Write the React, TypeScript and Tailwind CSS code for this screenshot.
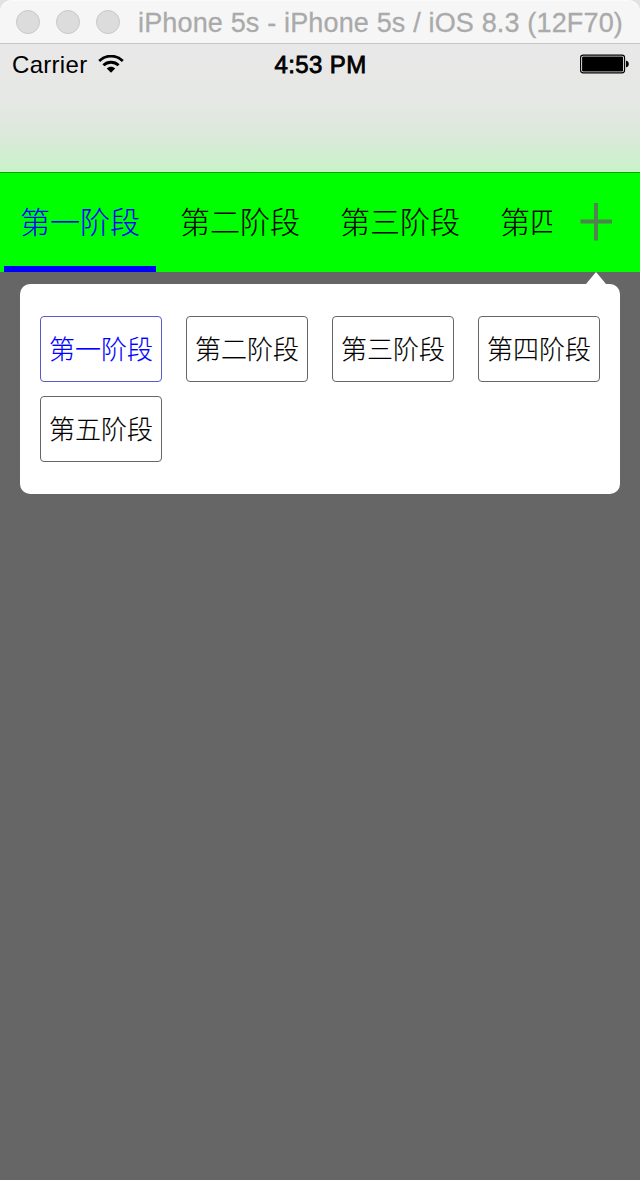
import { useState } from 'react'
import clsx from 'clsx'

const stages = ['第一阶段', '第二阶段', '第三阶段', '第四阶段', '第五阶段']

function TitleBar() {
  return (
    <div className="bg-[#e2e2e2]">
      <div className="flex h-11 items-center rounded-t-xl border-b border-b-[#c6c6c6] bg-[#f6f6f6] pl-4 pt-px shadow-[inset_0_1px_0_#fbfbfb]">
        <div className="flex gap-4">
          {[0, 1, 2].map((dot) => (
            <span key={dot} className="h-6 w-6 rounded-full border border-[#c9c9c9] bg-[#dcdcdc]" />
          ))}
        </div>
        <h1 className="ml-[18px] mt-[3px] whitespace-nowrap text-[27px] leading-none tracking-[0.16px] text-[#aaaaaa] [-webkit-text-stroke:0.3px_#aaaaaa]">
          iPhone 5s - iPhone 5s / iOS 8.3 (12F70)
        </h1>
      </div>
    </div>
  )
}

function WifiIcon() {
  return (
    <svg className="h-[18px] w-[26px]" viewBox="0 0 26 18" fill="none" stroke="black">
      <path strokeWidth={2.8} d="M1.2 5.9C7.8 -.5 18.2 -.5 24.8 5.9" />
      <path strokeWidth={2.8} d="M5.4 10.3C9.7 6.2 16.3 6.2 20.6 10.3" />
      <path fill="black" stroke="none" d="M8.8 13.5C11.3 11.3 14.7 11.3 17.2 13.5L13 17.8Z" />
    </svg>
  )
}

function BatteryIcon() {
  return (
    <svg className="h-5 w-[50px]" viewBox="0 0 50 20">
      <rect x="0.6" y="1.1" width="44" height="17.8" rx="2.6" fill="none" stroke="black" strokeWidth={1.1} />
      <rect x="2.1" y="2.6" width="41" height="14.8" rx="1.2" fill="black" />
      <path d="M46 6.8C49.7 6.8 49.7 13.2 46 13.2Z" fill="black" />
    </svg>
  )
}

function StatusBar() {
  return (
    <div className="grid h-10 grid-cols-3 items-center pl-3 pr-[10px] text-2xl leading-none">
      <div className="flex items-center gap-[11px]">
        <span className="pt-[2px] tracking-[0.3px]">Carrier</span>
        <WifiIcon />
      </div>
      <span className="pr-px pt-[2px] text-center tracking-[0.4px] [-webkit-text-stroke:0.8px_black]">4:53 PM</span>
      <div className="flex justify-end">
        <BatteryIcon />
      </div>
    </div>
  )
}

export default function App() {
  const [selected, setSelected] = useState(0)
  const [open, setOpen] = useState(true)

  return (
    <div className="flex h-[1180px] w-[640px] flex-col overflow-hidden bg-[#666666] font-['Liberation_Sans','Noto_Sans_CJK_SC',sans-serif] text-black">
      <TitleBar />
      <div className="h-32 bg-[linear-gradient(#e8e8e8,#e6e8e5_45%,#dce9db_70%,#c8f2c8)]">
        <StatusBar />
      </div>

      <nav className="flex h-[100px] shrink-0 border-t border-[#00a800] bg-[#00ff00]">
        <div className="flex w-[552px] overflow-hidden">
          {stages.map((stage, i) => (
            <button
              key={stage}
              onClick={() => setSelected(i)}
              className={clsx(
                'flex w-40 shrink-0 flex-col items-center justify-between text-[30px] font-light leading-none [-webkit-text-stroke:0.1px]',
                i === selected && 'text-[#0000ff]'
              )}
            >
              <span className="mt-[35px]">{stage}</span>
              {i === selected && <span className="h-[6px] w-[152px] bg-[#0000ff]" />}
            </button>
          ))}
        </div>
        <button onClick={() => setOpen(!open)} className="flex flex-1 justify-center pt-[30px]">
          <svg className="h-[38px] w-8" viewBox="0 0 32 38" stroke="#4f844f" strokeWidth={4}>
            <path d="M16 0V37.5M.5 18.5H32" />
          </svg>
        </button>
      </nav>

      {open && (
        <div className="px-5">
          <svg className="ml-auto mr-[14px] block h-3 w-5" viewBox="0 0 20 12" fill="white">
            <path d="M10 0L20 12H0Z" />
          </svg>
          <div className="grid h-[210px] grid-cols-4 content-start gap-x-6 gap-y-[14px] rounded-[10px] bg-white px-5 pt-8">
            {stages.map((stage, i) => (
              <button
                key={stage}
                onClick={() => setSelected(i)}
                className={clsx(
                  'flex h-[66px] items-center justify-center whitespace-nowrap rounded border pt-[2px] text-[26px] font-light leading-none [-webkit-text-stroke:0.1px]',
                  i === selected ? 'border-[#5a5ac8] text-[#0000ff]' : 'border-[#666666]'
                )}
              >
                {stage}
              </button>
            ))}
          </div>
        </div>
      )}
    </div>
  )
}
